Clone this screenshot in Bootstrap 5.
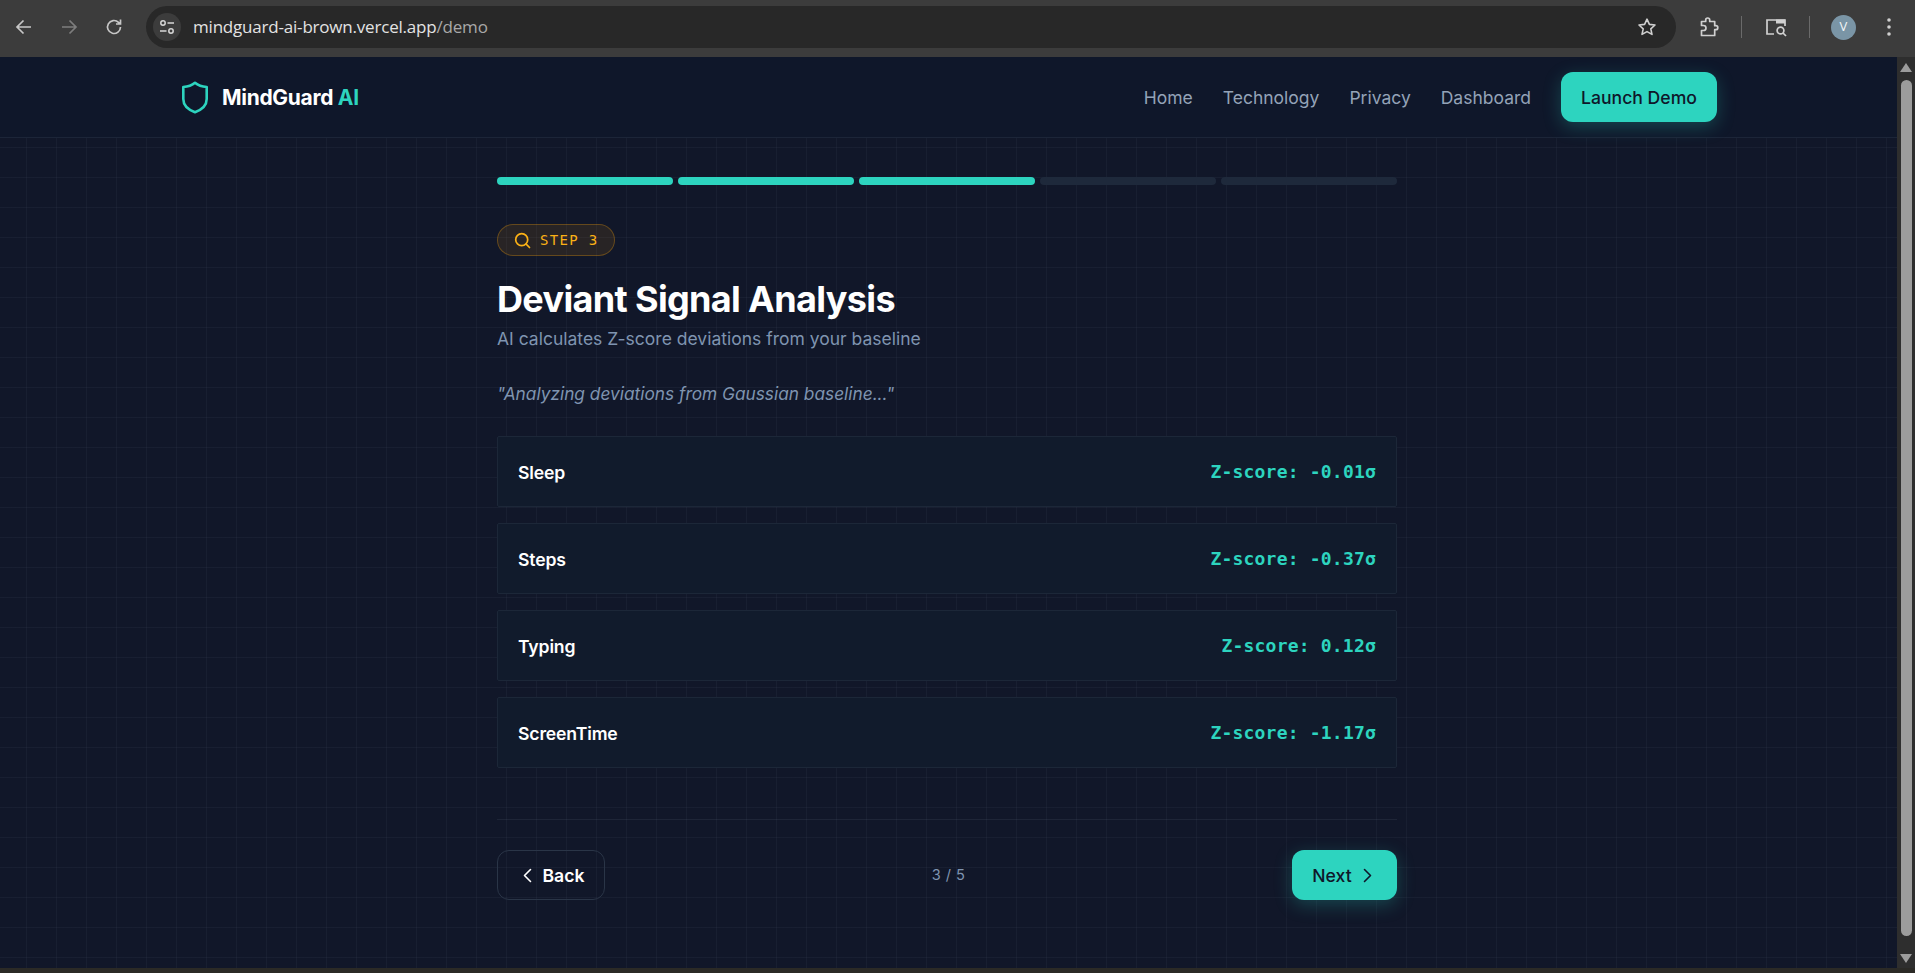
<!DOCTYPE html>
<html lang="en">
<head>
<meta charset="UTF-8">
<title>MindGuard AI - Demo</title>
<link rel="stylesheet" href="https://cdn.jsdelivr.net/npm/bootstrap@5.3.0/dist/css/bootstrap.min.css">
<style>
html, body { height: 100%; overflow: hidden; background: #111729; }
body { font-family: Inter, "Noto Sans", sans-serif; color: #fff; }
.app-frame { height: 973px; }

/* browser toolbar */
.chrome-bar { height: 57px; background: #3c3c3c; padding: 0 0 3px 6px; color: #c7c7c7; flex: none; }
.chrome-btn { width: 36px; height: 36px; margin-right: 9px; }
.chrome-btn.dim { color: #7d7d7d; }
.addr-pill { height: 42px; width: 1530px; margin-left: 5px; background: #282828; border-radius: 21px; padding: 0 19px 0 7px; }
.site-chip { width: 28px; height: 28px; border-radius: 50%; background: #3c3c3c; margin-right: 12px; }
.url-text { font-family: "Open Sans", sans-serif; font-size: 17px; color: #e3e3e3; letter-spacing: -0.2px; }
.url-text span { color: #a8a8a8; }
.tool-sep { width: 1px; height: 22px; background: #6a6a6a; }
.avatar-dot { width: 25px; height: 25px; border-radius: 50%; background: #7a95a6; color: #f2f6f8; font-size: 13px; font-family: "Open Sans", sans-serif; }

/* page */
.page-row { height: 911px; flex: none; }
.page-view {
  flex: 1 1 auto; min-width: 0; height: 100%;
  background-color: #111729;
  background-image:
    linear-gradient(rgba(148,163,184,0.055) 1px, transparent 1px),
    linear-gradient(90deg, rgba(148,163,184,0.055) 1px, transparent 1px);
  background-size: 30px 30px;
  background-position: 26px 0;
}
.scroll-rail { width: 18px; background: #2e2e2e; flex: none; padding-top: 6px; }
.scroll-thumb { width: 11px; height: 856px; background: #9c9c9c; border-radius: 6px; margin: 8px auto 0; }
.scroll-up, .scroll-down { width: 0; height: 0; margin: 0 auto; border-left: 6px solid transparent; border-right: 6px solid transparent; }
.scroll-up { border-bottom: 9px solid #9c9c9c; }
.scroll-down { border-top: 9px solid #9c9c9c; margin-top: auto; margin-bottom: 5px; }
.task-strip { height: 5px; background: #2b2a26; flex: none; }

.top-nav { height: 81px; padding: 0 180px 0 181px; border-bottom: 1px solid rgba(148,163,184,0.1); background: #0f172a; }
.brand-name { font-family: Inter, sans-serif; font-weight: 700; font-size: 21px; letter-spacing: -0.3px; color: #fff; padding: 0; margin: 0; gap: 13px; }
.brand-name span { padding-top: 2px; }
.brand-name em { font-style: normal; color: #2dd4bf; }
.top-nav .navbar-nav .nav-link { color: #94a3b8; font-size: 17.5px; padding: 3px 0 0; margin-right: 30px; }
.teal-btn { background: #2dd4bf; color: #0f172a; border: 0; border-radius: 12px; font-size: 17.6px; font-weight: 500; height: 50px; box-shadow: 0 5px 18px rgba(45,212,191,0.25); }
.teal-btn:hover { background: #2dd4bf; color: #0f172a; }
.launch-btn { width: 156px; padding: 3px 0 0; }

.flow-col { width: 900px; margin-left: 497px; padding-top: 39px; }
.step-bars { gap: 5px; }
.step-bar { flex: 1 1 0; height: 8px; border-radius: 4px; background: #1e293b; }
.step-bar.done { background: #2dd4bf; }
.step-pill { height: 32px; width: 118px; margin-top: 39px; border-radius: 16px; border: 1px solid rgba(245,158,11,0.3); background: rgba(245,158,11,0.1); color: #fbb116; gap: 9px; padding-left: 16px; font-family: "DejaVu Sans Mono", monospace; font-size: 14px; letter-spacing: 1.3px; }
.flow-title { font-family: Inter, sans-serif; font-weight: 700; font-size: 36px; letter-spacing: -0.65px; line-height: 48px; margin: 19px 0 0; color: #fff; }
.flow-sub { color: #7f94b0; font-size: 17.5px; line-height: 32px; margin: 0; }
.flow-quote { color: #7f94b0; font-size: 17.3px; font-style: italic; line-height: 27px; margin: 25px 0 0; }
.signal-list { margin-top: 29px; gap: 16px; }
.signal-row { height: 71px; padding: 0 20px; background: #111b2c; border: 1px solid #1c2738; border-radius: 2px; }
.signal-name { font-weight: 600; font-size: 17.6px; letter-spacing: -0.15px; color: #fff; padding-top: 3px; }
.signal-val { font-family: "DejaVu Sans Mono", monospace; font-weight: 700; font-size: 18px; color: #2dd4bf; letter-spacing: 0.2px; }
.flow-foot { margin-top: 51px; padding-top: 30px; border-top: 1px solid rgba(148,163,184,0.1); }
.back-btn { width: 108px; height: 50px; border: 1px solid #2a3547; border-radius: 12px; background: transparent; color: #fff; font-weight: 600; font-size: 17.6px; gap: 6px; padding: 0; }
.back-btn:hover { color: #fff; background: transparent; border-color: #2a3547; }
.btn-label { padding-top: 3px; }
.step-count { color: #7f94b0; font-size: 14.6px; letter-spacing: 0.4px; padding-top: 2px; }
.next-btn { width: 105px; gap: 6px; padding: 0; }
</style>
</head>
<body>
<div class="app-frame d-flex flex-column">

  <div class="chrome-bar d-flex align-items-center">
    <div class="chrome-btn d-flex align-items-center justify-content-center">
      <svg width="20" height="20" viewBox="0 0 20 20" fill="none" stroke="currentColor" stroke-width="1.7"><path d="M17 10H3.500M9.500 3.500 3 10l6.500 6.500"/></svg>
    </div>
    <div class="chrome-btn dim d-flex align-items-center justify-content-center">
      <svg width="20" height="20" viewBox="0 0 20 20" fill="none" stroke="currentColor" stroke-width="1.7"><path d="M3 10h13.500M10.500 3.500 17 10l-6.500 6.500"/></svg>
    </div>
    <div class="chrome-btn d-flex align-items-center justify-content-center">
      <svg width="20" height="20" viewBox="0 0 20 20" fill="none" stroke="currentColor" stroke-width="1.7"><path d="M16.500 10a6.500 6.500 0 1 1-2-4.700L16.500 7M16.500 2.500V7H12"/></svg>
    </div>
    <div class="addr-pill d-flex align-items-center">
      <div class="site-chip d-flex align-items-center justify-content-center">
        <svg width="18" height="18" viewBox="0 0 18 18" fill="none" stroke="#d6d6d6" stroke-width="1.5"><circle cx="5" cy="5" r="2.200"/><path d="M9.500 5H16M2 13h6.500"/><circle cx="13" cy="13" r="2.200"/></svg>
      </div>
      <div class="url-text">mindguard-ai-brown.vercel.app<span>/demo</span></div>
      <svg class="ms-auto" width="20" height="20" viewBox="0 0 20 20" fill="none" stroke="#d0d0d0" stroke-width="1.6" stroke-linejoin="round"><path d="M10 2.200l2.400 5.200 5.600.6-4.200 3.800 1.200 5.600L10 14.600l-5 2.800 1.200-5.600L2 8l5.600-.6z"/></svg>
    </div>
    <div class="d-flex align-items-center" style="margin-left:22px">
      <svg width="22" height="22" viewBox="0 0 22 22" fill="none" stroke="#d0d0d0" stroke-width="1.7" stroke-linejoin="round"><path d="M3.500 5.500h4.200V4a2 2 0 0 1 4 0v1.500h5v4.200h1.100a2 2 0 0 1 0 4h-1.100v5.800H3.500v-5h2a2.500 2.500 0 0 0 0-5h-2z"/></svg>
      <div class="tool-sep" style="margin-left:21px"></div>
      <svg style="margin-left:22px" width="24" height="22" viewBox="0 0 24 22" fill="none" stroke="#d0d0d0" stroke-width="1.7"><path d="M10 18H3V4h18v6"/><path d="M12 3.500h9v4h-9z" fill="#d0d0d0" stroke="none"/><circle cx="16.500" cy="14.500" r="3.400"/><path d="M19 17l3 3"/></svg>
      <div class="tool-sep" style="margin-left:21px"></div>
      <div class="avatar-dot d-flex align-items-center justify-content-center" style="margin-left:21px">V</div>
      <svg style="margin-left:30px" width="6" height="20" viewBox="0 0 6 20" fill="#d0d0d0"><circle cx="3" cy="3" r="1.800"/><circle cx="3" cy="10" r="1.800"/><circle cx="3" cy="17" r="1.800"/></svg>
    </div>
  </div>

  <div class="page-row d-flex">
    <div class="page-view">
      <nav class="navbar navbar-expand top-nav">
        <a class="navbar-brand brand-name d-flex align-items-center" href="#">
          <svg width="28" height="33" viewBox="0 0 28 33" fill="none" stroke="#2dd4bf" stroke-width="2.600" stroke-linejoin="round"><path d="M14 1.800c3 2.600 7 4 11.700 4.200v12c0 6.300-4.600 10.600-11.700 13.200C6.900 28.600 2.300 24.300 2.300 18V6C7 5.800 11 4.400 14 1.800z"/></svg>
          <span>MindGuard <em>AI</em></span>
        </a>
        <ul class="navbar-nav ms-auto align-items-center">
          <li class="nav-item"><a class="nav-link" href="#">Home</a></li>
          <li class="nav-item"><a class="nav-link" href="#">Technology</a></li>
          <li class="nav-item"><a class="nav-link" href="#">Privacy</a></li>
          <li class="nav-item"><a class="nav-link" href="#">Dashboard</a></li>
          <li class="nav-item"><a class="btn teal-btn launch-btn d-flex align-items-center justify-content-center" href="#">Launch Demo</a></li>
        </ul>
      </nav>

      <main class="flow-col">
        <div class="step-bars d-flex">
          <div class="step-bar done"></div>
          <div class="step-bar done"></div>
          <div class="step-bar done"></div>
          <div class="step-bar"></div>
          <div class="step-bar"></div>
        </div>

        <div class="step-pill d-flex align-items-center">
          <svg width="17" height="17" viewBox="0 0 17 17" fill="none" stroke="currentColor" stroke-width="1.700" stroke-linecap="round"><circle cx="7.700" cy="7.700" r="6"/><path d="M12.200 12.200l3.300 3.300"/></svg>
          <span>STEP 3</span>
        </div>

        <h1 class="flow-title">Deviant Signal Analysis</h1>
        <p class="flow-sub">AI calculates Z-score deviations from your baseline</p>
        <p class="flow-quote">"Analyzing deviations from Gaussian baseline..."</p>

        <div class="signal-list d-flex flex-column">
          <div class="signal-row d-flex align-items-center justify-content-between"><span class="signal-name">Sleep</span><span class="signal-val">Z-score: -0.01σ</span></div>
          <div class="signal-row d-flex align-items-center justify-content-between"><span class="signal-name">Steps</span><span class="signal-val">Z-score: -0.37σ</span></div>
          <div class="signal-row d-flex align-items-center justify-content-between"><span class="signal-name">Typing</span><span class="signal-val">Z-score: 0.12σ</span></div>
          <div class="signal-row d-flex align-items-center justify-content-between"><span class="signal-name">ScreenTime</span><span class="signal-val">Z-score: -1.17σ</span></div>
        </div>

        <div class="flow-foot d-flex align-items-center justify-content-between">
          <button type="button" class="btn back-btn d-flex align-items-center justify-content-center">
            <svg width="19" height="19" viewBox="0 0 19 19" fill="none" stroke="currentColor" stroke-width="1.600" stroke-linecap="round" stroke-linejoin="round"><path d="M12.500 3.500 6.500 9.500l6 6"/></svg>
            <span class="btn-label">Back</span>
          </button>
          <span class="step-count">3 / 5</span>
          <button type="button" class="btn teal-btn next-btn d-flex align-items-center justify-content-center">
            <span class="btn-label">Next</span>
            <svg width="19" height="19" viewBox="0 0 19 19" fill="none" stroke="currentColor" stroke-width="1.600" stroke-linecap="round" stroke-linejoin="round"><path d="M6.500 3.500l6 6-6 6"/></svg>
          </button>
        </div>
      </main>
    </div>
    <div class="scroll-rail d-flex flex-column">
      <div class="scroll-up"></div>
      <div class="scroll-thumb"></div>
      <div class="scroll-down"></div>
    </div>
  </div>
  <div class="task-strip"></div>
</div>
<script src="https://cdn.jsdelivr.net/npm/bootstrap@5.3.0/dist/js/bootstrap.bundle.min.js"></script>
</body>
</html>
